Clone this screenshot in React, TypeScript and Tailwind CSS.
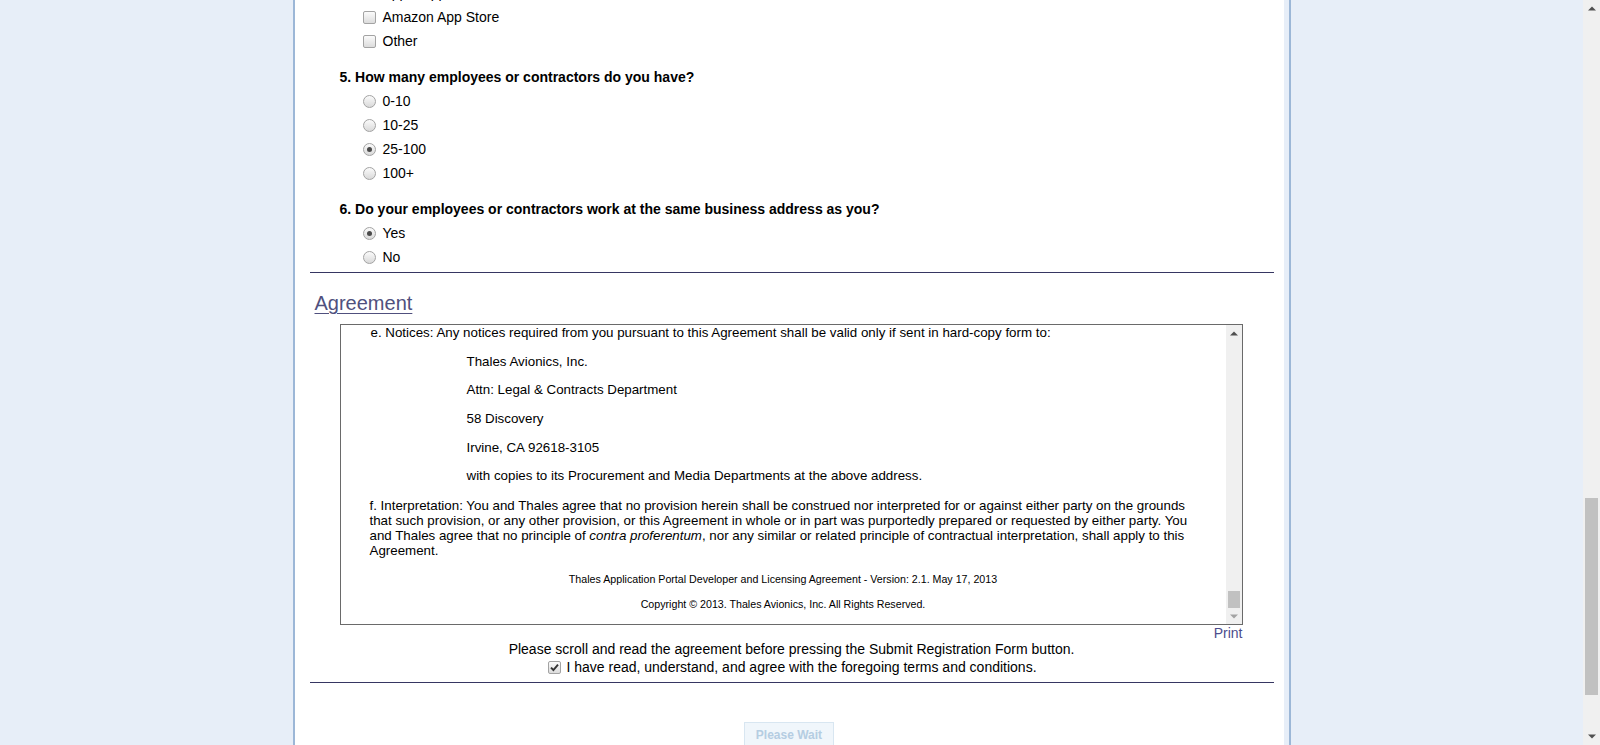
import React from "react";

const FONT = { fontFamily: '"Liberation Sans", Arial, sans-serif' };

function Check({ checked = false }: { checked?: boolean }) {
  return (
    <span className="relative inline-flex items-center justify-center w-[13px] h-[13px] shrink-0 rounded-[2px] border border-[#a3a3a3] bg-linear-to-b from-[#fbfbfb] to-[#dcdcdc]">
      {checked && (
        <svg width="9" height="9" viewBox="0 0 9 9" className="block">
          <path d="M1 4.6 L3.4 7 L8 1.6" fill="none" stroke="#333" strokeWidth="1.9" />
        </svg>
      )}
    </span>
  );
}

function Radio({ checked = false }: { checked?: boolean }) {
  return (
    <span className="relative inline-flex items-center justify-center w-[13px] h-[13px] shrink-0 rounded-full border border-[#a3a3a3] bg-linear-to-b from-[#fbfbfb] to-[#d9d9d9]">
      {checked && <span className="block w-[5px] h-[5px] rounded-full bg-[#4a4a4a]" />}
    </span>
  );
}

function Option({ label, kind, checked = false }: { label: string; kind: "c" | "r"; checked?: boolean }) {
  return (
    <div className="flex items-center h-6 pl-[68px] gap-[7px] text-[14px] text-black">
      {kind === "c" ? <Check checked={checked} /> : <Radio checked={checked} />}
      <span>{label}</span>
    </div>
  );
}

function Question({ text }: { text: string }) {
  return <div className="flex items-center h-6 mt-3 pl-[45px] text-[14px] font-bold text-black">{text}</div>;
}

function Tri({ dir, color }: { dir: "up" | "down"; color: string }) {
  return (
    <svg width="8" height="5" viewBox="0 0 8 5" className="block">
      {dir === "up" ? <polygon points="0,4.5 8,4.5 4,0.5" fill={color} /> : <polygon points="0,0.5 8,0.5 4,4.5" fill={color} />}
    </svg>
  );
}

export default function App() {
  return (
    <div className="flex w-full h-[745px] overflow-hidden bg-[#e7eef8]" style={FONT}>
      <div className="flex-1 flex justify-center">
        <div className="w-[998px] h-full border-x-2 border-[#9cb7d7] bg-[#e7eef8] flex">
          <div className="w-[989px] h-full bg-white overflow-hidden">
            <div className="mt-[-19px]">
              <Option kind="c" label="Apple App Store" />
              <Option kind="c" label="Amazon App Store" />
              <Option kind="c" label="Other" />
              <Question text="5. How many employees or contractors do you have?" />
              <Option kind="r" label="0-10" />
              <Option kind="r" label="10-25" />
              <Option kind="r" label="25-100" checked />
              <Option kind="r" label="100+" />
              <Question text="6. Do your employees or contractors work at the same business address as you?" />
              <Option kind="r" label="Yes" checked />
              <Option kind="r" label="No" />
            </div>
            <div className="mt-[3px] ml-[15px] mr-[10px] h-px bg-[#363662]" />

            <div className="mt-[19px] pl-[20px] leading-[23px]">
              <span className="text-[20px] text-[#50507e] underline underline-offset-[3px] decoration-1">Agreement</span>
            </div>

            <div className="mt-[8px] ml-[45px] w-[903px]">
              <div className="flex h-[301px] border border-[#6a6a6a] bg-white">
                <div className="flex-1 overflow-hidden text-[13.33px] text-black">
                  <div>
                    <div className="pl-[30px] leading-[15.33px]">
                      e. Notices: Any notices required from you pursuant to this Agreement shall be valid only if sent in hard-copy form to:
                    </div>
                    <div className="pl-[126px] leading-[15.33px] mt-[13.33px]">Thales Avionics, Inc.</div>
                    <div className="pl-[126px] leading-[15.33px] mt-[13.33px]">Attn: Legal &amp; Contracts Department</div>
                    <div className="pl-[126px] leading-[15.33px] mt-[13.33px]">58 Discovery</div>
                    <div className="pl-[126px] leading-[15.33px] mt-[13.33px]">Irvine, CA 92618-3105</div>
                    <div className="pl-[126px] leading-[15.33px] mt-[13.33px]">
                      with copies to its Procurement and Media Departments at the above address.
                    </div>
                    <div className="pl-[29px] leading-[15px] mt-[14px] whitespace-nowrap">
                      <div>
                        f. Interpretation: You and Thales agree that no provision herein shall be construed nor interpreted for or against either party on the grounds
                      </div>
                      <div>
                        that such provision, or any other provision, or this Agreement in whole or in part was purportedly prepared or requested by either party. You
                      </div>
                      <div>
                        and Thales agree that no principle of <i>contra proferentum</i>, nor any similar or related principle of contractual interpretation, shall apply to this
                      </div>
                      <div>Agreement.</div>
                    </div>
                    <div className="mt-[15px] text-center text-[10.67px] leading-[12px]">
                      Thales Application Portal Developer and Licensing Agreement - Version: 2.1. May 17, 2013
                    </div>
                    <div className="mt-[13px] text-center text-[10.67px] leading-[12px]">
                      Copyright © 2013. Thales Avionics, Inc. All Rights Reserved.
                    </div>
                  </div>
                </div>
                <div className="w-[16px] bg-[#f0f0f0] flex flex-col">
                  <div className="h-[17px] flex items-center justify-center">
                    <Tri dir="up" color="#505050" />
                  </div>
                  <div className="flex-1" />
                  <div className="h-[17px] mx-[2px] bg-[#c1c1c1]" />
                  <div className="h-[16px] flex items-center justify-center">
                    <Tri dir="down" color="#a3a3a3" />
                  </div>
                </div>
              </div>
              <div className="text-right text-[14px] leading-[16px] text-[#4c4c8c]">Print</div>
            </div>

            <div className="pl-[5px] text-center text-[14px] leading-[16px] text-black">
              Please scroll and read the agreement before pressing the Submit Registration Form button.
            </div>
            <div className="pl-[7px] flex items-center justify-center gap-[5px] h-[20px] text-[14px] text-black">
              <Check checked />
              <span>I have read, understand, and agree with the foregoing terms and conditions.</span>
            </div>
            <div className="mt-[5px] ml-[15px] mr-[10px] h-px bg-[#363662]" />

            <div className="mt-[39px] flex justify-center">
              <div className="w-[90px] h-[28px] pt-[5px] border border-[#d8e6f1] bg-[#f0f6fb] text-center text-[12px] leading-[14px] font-bold text-[#b5cde2]">
                Please Wait
              </div>
            </div>
          </div>
        </div>
      </div>

      <div className="w-[17px] h-full bg-[#f0f0f0] flex flex-col">
        <div className="h-[17px] flex items-center justify-center">
          <Tri dir="up" color="#505050" />
        </div>
        <div className="flex-1" />
        <div className="h-[197px] mx-[2px] bg-[#c1c1c1]" />
        <div className="h-[33px]" />
        <div className="h-[17px] flex items-center justify-center">
          <Tri dir="down" color="#505050" />
        </div>
      </div>
    </div>
  );
}
